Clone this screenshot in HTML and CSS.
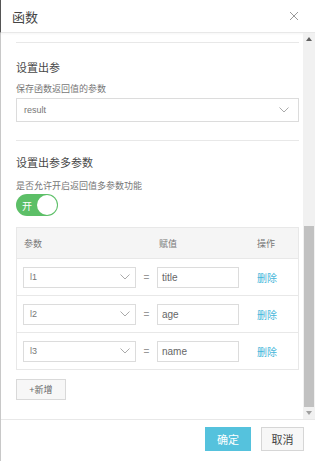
FILE: index.html
```html
<!DOCTYPE html>
<html lang="zh-CN">

<head>
    <meta charset="UTF-8">
    <meta name="viewport" content="width=device-width, initial-scale=1.0">
    <title>函数</title>
    <link rel="stylesheet" href="styles.css">
</head>

<body>
    <div class="dialog">
        <div class="dialog-header">
            <h3 class="dialog-title">函数</h3>
            <svg class="dialog-close" width="10" height="10" viewBox="0 0 10 10">
                <path d="M1 1 L9 9 M9 1 L1 9" stroke="#9a9a9a" stroke-width="1" fill="none" />
            </svg>
        </div>

        <div class="dialog-body">
            <div class="body-content">
                <div class="divider divider-top"></div>

                <!-- 设置出参 -->
                <h4 class="section-title">设置出参</h4>
                <div class="field-label">保存函数返回值的参数</div>
                <div class="select select-wide">
                    <span>result</span>
                    <svg class="chevron" width="10" height="6" viewBox="0 0 10 6">
                        <path d="M0.5 0.5 L5 5 L9.5 0.5" stroke="#aaa" fill="none" />
                    </svg>
                </div>

                <div class="divider divider-mid"></div>

                <!-- 设置出参多参数 -->
                <h4 class="section-title section-title-2">设置出参多参数</h4>
                <div class="field-label label-switch">是否允许开启返回值多参数功能</div>
                <div class="switch">
                    <span class="switch-text">开</span>
                    <span class="switch-knob"></span>
                </div>

                <div class="param-table">
                    <div class="param-row param-head">
                        <span>参数</span>
                        <span></span>
                        <span>赋值</span>
                        <span class="col-op">操作</span>
                    </div>
                    <div class="param-row">
                        <div class="select select-sm">
                            <span>l1</span>
                            <svg class="chevron" width="10" height="6" viewBox="0 0 10 6">
                                <path d="M0.5 0.5 L5 5 L9.5 0.5" stroke="#aaa" fill="none" />
                            </svg>
                        </div>
                        <span class="eq">=</span>
                        <div class="text-input">title</div>
                        <a class="col-op del-link">删除</a>
                    </div>
                    <div class="param-row">
                        <div class="select select-sm">
                            <span>l2</span>
                            <svg class="chevron" width="10" height="6" viewBox="0 0 10 6">
                                <path d="M0.5 0.5 L5 5 L9.5 0.5" stroke="#aaa" fill="none" />
                            </svg>
                        </div>
                        <span class="eq">=</span>
                        <div class="text-input">age</div>
                        <a class="col-op del-link">删除</a>
                    </div>
                    <div class="param-row">
                        <div class="select select-sm">
                            <span>l3</span>
                            <svg class="chevron" width="10" height="6" viewBox="0 0 10 6">
                                <path d="M0.5 0.5 L5 5 L9.5 0.5" stroke="#aaa" fill="none" />
                            </svg>
                        </div>
                        <span class="eq">=</span>
                        <div class="text-input">name</div>
                        <a class="col-op del-link">删除</a>
                    </div>
                </div>

                <button class="btn-add">+新增</button>
            </div>

            <!-- scrollbar -->
            <div class="scrollbar">
                <div class="scroll-arrow">
                    <svg width="6" height="4" viewBox="0 0 6 4"><path d="M0 4 L3 0 L6 4 Z" fill="#606060" /></svg>
                </div>
                <div class="scroll-track">
                    <div class="scroll-thumb"></div>
                </div>
                <div class="scroll-arrow">
                    <svg width="6" height="4" viewBox="0 0 6 4"><path d="M0 0 L3 4 L6 0 Z" fill="#a0a0a0" /></svg>
                </div>
            </div>
        </div>

        <div class="dialog-footer">
            <button class="btn btn-primary">确定</button>
            <button class="btn btn-default">取消</button>
        </div>
    </div>
</body>

</html>
```

FILE: styles.css
```css
* {
    margin: 0;
    padding: 0;
    box-sizing: border-box;
}

html,
body {
    width: 315px;
    height: 461px;
    background: #ffffff;
    font-family: "Liberation Sans", "Noto Sans CJK SC", sans-serif;
    color: #444;
    overflow: hidden;
}

.dialog {
    width: 315px;
    height: 461px;
    display: flex;
    flex-direction: column;
    border-left: 1px solid #c8c8c8;
}

/* header */
.dialog-header {
    height: 33px;
    flex: none;
    display: flex;
    align-items: center;
    justify-content: space-between;
    padding: 0 16px 0 11px;
    border-bottom: 1px solid #e8e8e8;
    box-shadow: 0 1px 2px rgba(0, 0, 0, 0.04);
    border-left: 1px solid #555;
    margin-left: -1px;
}

.dialog-title {
    font-size: 13px;
    font-weight: 400;
    color: #444;
}

.dialog-close {
    display: block;
}

/* body */
.dialog-body {
    flex: 1;
    display: flex;
    overflow: hidden;
}

.body-content {
    flex: 1;
    padding: 0 4px 0 15px;
}

.divider {
    height: 1px;
    background: #e8e8e8;
}

.divider-top {
    margin-top: 9px;
}

.divider-mid {
    margin-top: 18px;
}

.section-title {
    margin-top: 17px;
    font-size: 11px;
    line-height: 16px;
    font-weight: 400;
    color: #484848;
}

.section-title-2 {
    margin-top: 14px;
}

.field-label {
    margin-top: 6px;
    font-size: 9px;
    line-height: 14px;
    color: #777;
}

.label-switch {
    margin-top: 8px;
}

.select {
    display: flex;
    align-items: center;
    justify-content: space-between;
    border: 1px solid #dcdcdc;
    background: #fff;
    color: #777;
}

.select-wide {
    margin-top: 2px;
    height: 24px;
    padding: 0 9px 0 7px;
    font-size: 9px;
}

.select-sm {
    height: 21px;
    padding: 0 5px 0 6px;
    font-size: 9px;
}

.chevron {
    display: block;
}

/* switch */
.switch {
    margin-top: 1px;
    width: 42px;
    height: 22px;
    border-radius: 11px;
    background: #5cbf67;
    display: flex;
    align-items: center;
    padding: 1px;
}

.switch-text {
    flex: 1;
    text-align: center;
    color: #fff;
    font-size: 10px;
}

.switch-knob {
    width: 20px;
    height: 20px;
    border-radius: 50%;
    background: #fff;
}

/* table */
.param-table {
    margin-top: 11px;
    border: 1px solid #e8e8e8;
}

.param-row {
    display: grid;
    grid-template-columns: 113px 21px 82px 1fr;
    align-items: center;
    height: 37px;
    padding: 0 6px;
    border-top: 1px solid #e8e8e8;
    font-size: 9px;
}

.param-row.param-head {
    height: 30px;
    border-top: none;
    background: #f5f5f5;
    color: #777;
    padding-left: 7px;
}

.param-head span:nth-child(3) {
    padding-left: 1px;
}

.col-op {
    padding-left: 18px;
}

.param-head .col-op {
    padding-left: 17px;
}

.eq {
    text-align: center;
    color: #999;
    font-size: 10px;
}

.text-input {
    height: 21px;
    border: 1px solid #dcdcdc;
    padding: 0 4px;
    display: flex;
    align-items: center;
    font-size: 10px;
    color: #666;
}

.del-link {
    color: #45b6da;
    font-size: 10px;
    cursor: pointer;
}

.btn-add {
    margin-top: 9px;
    width: 50px;
    height: 21px;
    border: 1px solid #d9d9d9;
    background: #f7f7f7;
    color: #666;
    font-family: inherit;
    font-size: 9px;
}

/* scrollbar */
.scrollbar {
    width: 12px;
    flex: none;
    background: #f1f1f1;
    display: flex;
    flex-direction: column;
}

.scroll-arrow {
    height: 12px;
    display: flex;
    align-items: center;
    justify-content: center;
}

.scroll-track {
    flex: 1;
    display: flex;
    flex-direction: column;
    justify-content: flex-end;
    padding: 0 1px;
}

.scroll-thumb {
    height: 181px;
    background: #c1c1c1;
}

/* footer */
.dialog-footer {
    height: 42px;
    flex: none;
    display: flex;
    justify-content: flex-end;
    align-items: center;
    gap: 10px;
    padding: 0 11px 4px 0;
    border-top: 1px solid #e8e8e8;
}

.btn {
    height: 24px;
    font-family: inherit;
    font-size: 11px;
    border: 1px solid transparent;
}

.btn-primary {
    width: 46px;
    background: #55c2dd;
    border-color: #55c2dd;
    color: #fff;
}

.btn-default {
    width: 43px;
    background: #f7f7f7;
    border-color: #d6d6d6;
    color: #444;
}
```
